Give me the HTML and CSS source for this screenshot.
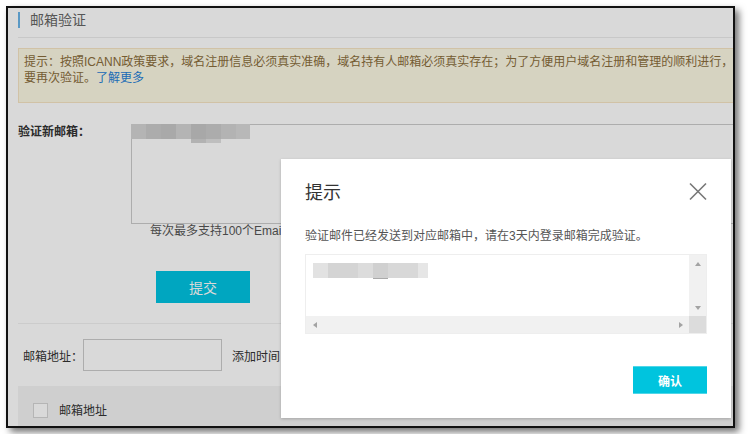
FILE: index.html
```html
<!DOCTYPE html>
<html>
<head>
	<meta charset="utf-8">
	<title>邮箱验证</title>
	<link rel="stylesheet" href="styles.css">
</head>
<body>
	<div class="shot">
		<div class="page">
			<div class="head"><span class="bar"></span>邮箱验证</div>
			<div class="alert">
				提示：按照ICANN政策要求，域名注册信息必须真实准确，域名持有人邮箱必须真实存在；为了方便用户域名注册和管理的顺利进行，变更邮箱时需<br>要再次验证。<a href="#">了解更多</a>
			</div>
			<div class="form-row">
				<div class="form-label">验证新邮箱：</div>
				<div class="field">
					<div class="textbox"><span class="blur"></span></div>
					<div class="hint">每次最多支持100个Email地址，多个地址请换行分隔</div>
					<button class="btn submit">提交</button>
				</div>
			</div>
			<div class="sep"></div>
			<div class="filter">
				<span>邮箱地址：</span>
				<input type="text" class="input">
				<span>添加时间：</span>
			</div>
			<div class="table-head">
				<span class="check"></span>
				<span class="th">邮箱地址</span>
			</div>
		</div>

		<div class="mask"></div>

		<div class="dialog">
			<div class="dialog-title">
				<span>提示</span>
				<svg class="close" width="18" height="19" viewBox="0 0 18 19">
					<path d="M1 1.5 L17 17.5 M17 1.5 L1 17.5" stroke="#777" stroke-width="1.6" fill="none"/>
				</svg>
			</div>
			<div class="dialog-msg">验证邮件已经发送到对应邮箱中，请在3天内登录邮箱完成验证。</div>
			<div class="result">
				<div class="result-body"><span class="blur2"></span></div>
				<div class="vbar">
					<span class="arrow up"><i></i></span>
					<span class="arrow down"><i></i></span>
				</div>
				<div class="hbar">
					<span class="arrow left"><i></i></span>
					<span class="arrow right"><i></i></span>
				</div>
				<div class="corner"></div>
			</div>
			<div class="dialog-foot">
				<button class="btn confirm">确认</button>
			</div>
		</div>
	</div>
</body>
</html>
```

FILE: styles.css
```css
body {
	margin: 0;
	background: #fff;
	font-family: "Liberation Sans", "Noto Sans CJK SC", sans-serif;
	font-size: 12px;
}
.shot {
	position: relative;
	width: 725px;
	height: 418px;
	margin: 6px;
	border: 2px solid #111;
	overflow: hidden;
	background: #fff;
	box-shadow: 4px 4px 7px rgba(0, 0, 0, 0.55);
}
.page {
	width: 900px;
	padding: 4px 0 0 10px;
}
.head {
	display: flex;
	align-items: center;
	height: 16px;
	padding-bottom: 9px;
	border-bottom: 1px solid #ebebeb;
	font-size: 14px;
	line-height: 16px;
	color: #666;
}
.head .bar {
	width: 2px;
	height: 16px;
	margin-right: 10px;
	background: #6ab4e8;
}
.alert {
	margin-top: 10px;
	padding: 5px 5px 16px;
	border: 1px solid #f6e4c4;
	background: #fcf8e3;
	color: #8a6d3b;
	line-height: 16px;
}
.alert a {
	color: #2580d6;
	text-decoration: none;
}
.form-row {
	display: flex;
	margin-top: 21px;
}
.form-label {
	width: 113px;
	padding-top: 1px;
	font-weight: bold;
	line-height: 14px;
	color: #333;
}
.textbox {
	position: relative;
	width: 620px;
	height: 100px;
	box-sizing: border-box;
	border: 1px solid #ccc;
	background: #fff;
}
.blur {
	position: absolute;
	left: -1px;
	top: -1px;
	width: 119px;
	height: 15px;
	background: linear-gradient(to right,
		#d4d4d4 0 15px, #cacaca 15px 30px, #c7c7c7 30px 45px, #d4d4d4 45px 60px,
		#c6c6c6 60px 75px, #cacaca 75px 90px, #d3d3d3 90px 105px, #d9d9d9 105px 119px);
}
.blur::after {
	content: "";
	position: absolute;
	left: 60px;
	top: 15px;
	width: 30px;
	height: 4px;
	background: linear-gradient(to right, #d2d2d2 0 15px, #e0e0e0 15px 30px);
}
.hint {
	margin-left: 19px;
	line-height: 14px;
	color: #555;
}
.btn {
	border: 0;
	padding: 0;
	color: #fff;
	font-family: inherit;
	cursor: pointer;
}
.submit {
	display: block;
	margin: 33px 0 0 25px;
	width: 94px;
	height: 32px;
	background: #00c4e2;
	font-size: 14px;
}
.sep {
	margin-top: 20px;
	border-top: 1px solid #f0f0f0;
}
.filter {
	display: flex;
	align-items: center;
	margin-top: 15px;
	padding-left: 5px;
	color: #333;
}
.input {
	width: 139px;
	height: 32px;
	box-sizing: border-box;
	margin: 0 10px 0 0;
	border: 1px solid #ccc;
	background: #fff;
}
.table-head {
	display: flex;
	align-items: center;
	height: 17px;
	margin-top: 15px;
	padding: 16px 0 40px 15px;
	background: #f4f4f4;
	color: #333;
}
.check {
	width: 15px;
	height: 15px;
	box-sizing: border-box;
	border: 1px solid #d5d5d5;
	background: #fff;
}
.th {
	margin-left: 11px;
	padding-top: 2px;
	line-height: 17px;
}
.mask {
	position: absolute;
	left: 0;
	top: 0;
	right: 0;
	bottom: 0;
	background: rgba(0, 0, 0, 0.15);
}
.dialog {
	position: absolute;
	left: 273px;
	top: 151px;
	width: 450px;
	height: 259px;
	box-sizing: border-box;
	padding: 22px 24px 24px;
	background: #fff;
	box-shadow: 0 1px 3px rgba(0, 0, 0, 0.2);
}
.dialog-title {
	display: flex;
	justify-content: space-between;
	align-items: center;
	height: 24px;
	font-size: 18px;
	line-height: 24px;
	color: #333;
}
.close {
	display: block;
	margin-top: -3px;
}
.dialog-msg {
	margin-top: 22px;
	line-height: 18px;
	color: #555;
}
.result {
	display: grid;
	grid-template-columns: 1fr 17px;
	grid-template-rows: 1fr 17px;
	height: 80px;
	margin-top: 9px;
	box-sizing: border-box;
	border: 1px solid #eee;
}
.result-body {
	position: relative;
}
.blur2 {
	position: absolute;
	left: 7px;
	top: 8px;
	width: 115px;
	height: 15px;
	background: linear-gradient(to right,
		#e2e2e2 0 15px, #d4d4d4 15px 45px, #dcdcdc 45px 60px,
		#d0d0d0 60px 75px, #d8d8d8 75px 105px, #e6e6e6 105px 115px);
}
.blur2::after {
	content: "";
	position: absolute;
	left: 60px;
	top: 15px;
	width: 15px;
	height: 1px;
	background: #aaa;
}
.vbar, .hbar {
	display: flex;
	justify-content: space-between;
	background: #f1f1f1;
}
.vbar {
	flex-direction: column;
}
.corner {
	background: #dcdcdc;
}
.arrow {
	display: flex;
	align-items: center;
	justify-content: center;
	width: 17px;
	height: 17px;
}
.arrow i {
	width: 0;
	height: 0;
}
.up i {
	border-left: 3.5px solid transparent;
	border-right: 3.5px solid transparent;
	border-bottom: 4px solid #a3a3a3;
}
.down i {
	border-left: 3.5px solid transparent;
	border-right: 3.5px solid transparent;
	border-top: 4px solid #a3a3a3;
}
.left i {
	border-top: 3.5px solid transparent;
	border-bottom: 3.5px solid transparent;
	border-right: 4px solid #a3a3a3;
}
.right i {
	border-top: 3.5px solid transparent;
	border-bottom: 3.5px solid transparent;
	border-left: 4px solid #a3a3a3;
}
.dialog-foot {
	display: flex;
	justify-content: flex-end;
	margin-top: 32px;
}
.confirm {
	width: 74px;
	height: 28px;
	border-top: 1px solid #4fd6e8;
	border-bottom: 1px solid #4fd6e8;
	background: #00c4de;
	font-size: 12px;
	font-weight: bold;
}
```
